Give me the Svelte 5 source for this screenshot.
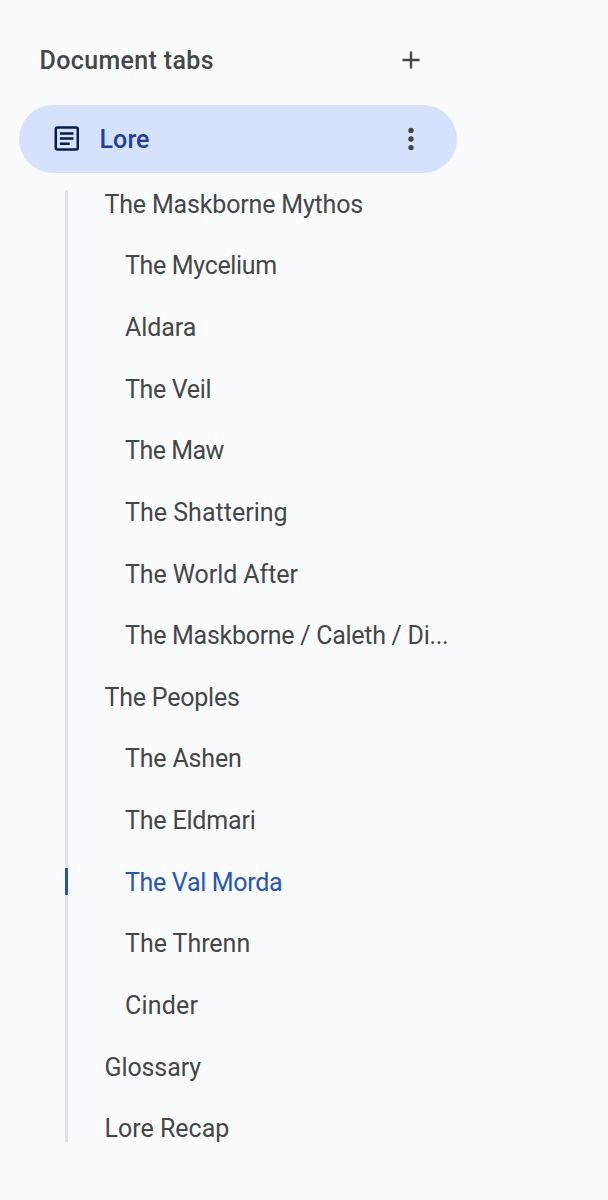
<script lang="ts">
  type Heading = { title: string; level: number; tracking: number };

  const headings: Heading[] = [
    { title: 'The Maskborne Mythos', level: 1, tracking: -0.17 },
    { title: 'The Mycelium', level: 2, tracking: -0.33 },
    { title: 'Aldara', level: 2, tracking: -0.06 },
    { title: 'The Veil', level: 2, tracking: -0.35 },
    { title: 'The Maw', level: 2, tracking: -0.5 },
    { title: 'The Shattering', level: 2, tracking: 0.02 },
    { title: 'The World After', level: 2, tracking: -0.07 },
    { title: 'The Maskborne / Caleth / Di...', level: 2, tracking: -0.28 },
    { title: 'The Peoples', level: 1, tracking: -0.22 },
    { title: 'The Ashen', level: 2, tracking: -0.17 },
    { title: 'The Eldmari', level: 2, tracking: -0.18 },
    { title: 'The Val Morda', level: 2, tracking: -0.32 },
    { title: 'The Threnn', level: 2, tracking: -0.03 },
    { title: 'Cinder', level: 2, tracking: 0.2 },
    { title: 'Glossary', level: 1, tracking: -0.1 },
    { title: 'Lore Recap', level: 1, tracking: 0 }
  ];

  let current = $state('The Val Morda');
</script>

<aside class="sidebar">
  <header class="header">
    <h2>Document tabs</h2>
    <button class="icon-button" aria-label="Add tab">
      <svg width="18" height="18" viewBox="0 0 18 18" fill="none" stroke="#444746" stroke-width="2.4">
        <path d="M9 0.4v17.2M0.4 9h17.2"></path>
      </svg>
    </button>
  </header>

  <div class="tab">
    <svg class="tab-icon" width="25" height="25" viewBox="0 0 25 25" fill="none" stroke="#041e49">
      <rect x="1.8" y="1.6" width="22" height="21.8" rx="1.4" stroke-width="2.5"></rect>
      <path d="M5.9 7.5h13.6M5.9 12.5h13.6M5.9 17.8h9.8" stroke-width="2.4"></path>
    </svg>
    <span class="tab-title">Lore</span>
    <button class="icon-button" aria-label="Tab options">
      <svg width="6" height="24" viewBox="0 0 6 24" fill="#444746">
        <circle cx="3" cy="3.4" r="2.7"></circle>
        <circle cx="3" cy="12" r="2.7"></circle>
        <circle cx="3" cy="20.6" r="2.7"></circle>
      </svg>
    </button>
  </div>

  <nav class="outline">
    <div class="rail"></div>
    {#each headings as heading}
      <button
        class="heading"
        class:nested={heading.level === 2}
        class:active={heading.title === current}
        onclick={() => (current = heading.title)}
      >
        <span style="letter-spacing: {heading.tracking}px">{heading.title}</span>
      </button>
    {/each}
  </nav>
</aside>

<style>
  :global(body) {
    background: #f9fbff;
  }

  .sidebar {
    box-sizing: border-box;
    width: 608px;
    height: 1200px;
    padding: 16px 151px 0 19px;
    overflow: hidden;
    background: #f9fbff;
    color: #444746;
    font-family: Roboto, "Liberation Sans", sans-serif;
  }

  button {
    padding: 0;
    border: 0;
    background: none;
    color: inherit;
    font: inherit;
    cursor: pointer;
  }

  .header {
    display: flex;
    align-items: center;
    justify-content: space-between;
    height: 88.5px;
    padding: 0 26px 0 20.5px;
  }

  h2 {
    margin: 0;
    font-size: 25px;
    font-weight: 500;
    letter-spacing: 0.36px;
  }

  .icon-button {
    display: flex;
    align-items: center;
    justify-content: center;
    width: 40px;
    height: 40px;
  }

  .tab {
    display: flex;
    align-items: center;
    box-sizing: border-box;
    height: 68.5px;
    padding: 0 26px 0 35px;
    border-radius: 35px;
    background: #d6e2fb;
  }

  .tab-title {
    flex: 1;
    margin-left: 20.5px;
    padding-top: 1px;
    color: #1c3fa0;
    font-size: 25px;
    font-weight: 500;
    letter-spacing: 0.1px;
  }

  .outline {
    position: relative;
    display: flex;
    flex-direction: column;
  }

  .rail {
    position: absolute;
    top: 17px;
    bottom: 17.3px;
    left: 46px;
    width: 3px;
    background: #dfe4ea;
  }

  .heading {
    position: relative;
    height: 61.63px;
    padding-top: 1px;
    padding-left: 85.5px;
    font-size: 25px;
    text-align: left;
    white-space: nowrap;
  }

  .nested {
    padding-left: 106px;
  }

  .active {
    color: #2253c9;
  }

  .active::before {
    content: "";
    position: absolute;
    top: 17px;
    left: 46px;
    width: 3px;
    height: 27px;
    background: #2253c9;
  }
</style>
